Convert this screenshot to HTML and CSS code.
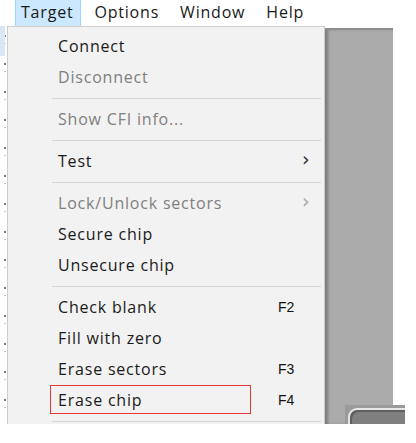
FILE: index.html
```html
<!DOCTYPE html>
<html>
<head>
<meta charset="utf-8">
<link rel="stylesheet" href="styles.css">
</head>
<body>
<div class="menubar">
  <div class="mb-item active">Target</div>
  <div class="mb-item">Options</div>
  <div class="mb-item">Window</div>
  <div class="mb-item">Help</div>
</div>
<div class="main">
  <div class="strip"></div>
  <div class="menu">
    <div class="item"><span class="label">Connect</span></div>
    <div class="item disabled"><span class="label">Disconnect</span></div>
    <div class="sep"></div>
    <div class="item disabled"><span class="label">Show CFI info...</span></div>
    <div class="sep"></div>
    <div class="item"><span class="label">Test</span><span class="arrow">&#x203A;</span></div>
    <div class="sep"></div>
    <div class="item disabled"><span class="label">Lock/Unlock sectors</span><span class="arrow">&#x203A;</span></div>
    <div class="item"><span class="label">Secure chip</span></div>
    <div class="item"><span class="label">Unsecure chip</span></div>
    <div class="sep"></div>
    <div class="item"><span class="label">Check blank</span><span class="key">F2</span></div>
    <div class="item"><span class="label">Fill with zero</span></div>
    <div class="item"><span class="label">Erase sectors</span><span class="key">F3</span></div>
    <div class="item marked"><span class="label">Erase chip</span><span class="key">F4</span></div>
    <div class="sep"></div>
  </div>
  <div class="shade">
    <div class="btn"><div class="btn-in"></div></div>
  </div>
</div>
</body>
</html>
```
FILE: styles.css
```css
html, body {
  margin: 0;
  padding: 0;
}
body {
  width: 416px;
  height: 443px;
  background: #ffffff;
  overflow: hidden;
  font-family: "Open Sans", "Noto Sans", sans-serif;
  color: #1a1a1a;
}
.menubar {
  height: 26px;
  display: flex;
  align-items: stretch;
  padding-left: 15px;
  font-size: 16px;
  letter-spacing: 0.8px;
}
.mb-item {
  display: flex;
  align-items: center;
  padding: 0 7px 1px 5px;
  margin-right: 7px;
  border: 1px solid transparent;
  border-top: none;
}
.mb-item.active {
  background: #cce8ff;
  border-color: #99d1ff;
  border-bottom: 1px solid #cce8ff;
}
.main {
  display: flex;
  height: 398px;
  overflow: hidden;
}
.strip {
  width: 7px;
  background:
    linear-gradient(#d9e6f3, #d9e6f3) 0 0 / 5px 30px no-repeat,
    repeating-linear-gradient(#ffffff 0 9px, #7a7a7a 9px 11px, #ffffff 11px 17px, #c8c8c8 17px 18px, #ffffff 18px 28px) 4px 0 / 2px 100% no-repeat,
    #ffffff;
}
.menu {
  width: 316px;
  background: #f2f2f2;
  border: 1px solid #cccccc;
  border-bottom: none;
  padding-top: 4px;
  display: flex;
  flex-direction: column;
  font-size: 16px;
  letter-spacing: 0.8px;
}
.item {
  height: 31px;
  flex: none;
  display: flex;
  align-items: center;
  padding-left: 50px;
  padding-bottom: 2px;
  box-sizing: border-box;
  position: relative;
}
.item.disabled {
  color: #7f7f7f;
}
.label {
  flex: 1;
}
.arrow {
  width: 22px;
  font-size: 19px;
  font-family: "DejaVu Sans", sans-serif;
  color: #333333;
  line-height: 1;
  margin-bottom: 3px;
  letter-spacing: 0;
}
.item.disabled .arrow {
  color: #a8a8a8;
}
.key {
  width: 46px;
  font-family: "Liberation Sans", Arial, sans-serif;
  font-size: 14px;
  letter-spacing: 0;
  color: #111111;
}
.item.marked::after {
  content: "";
  position: absolute;
  left: 42px;
  top: 0;
  width: 199px;
  height: 27px;
  border: 1px solid #e53935;
}
.sep {
  flex: none;
  height: 11px;
  margin: 0 3px 0 44px;
  background: linear-gradient(#d5d5d5, #d5d5d5) 0 5px / 100% 1px no-repeat;
}
.shade {
  width: 68px;
  margin-top: 2px;
  background: #ababab;
  border-top: 2px solid #8e8e8e;
  box-shadow: inset 4px 0 3px -1px #7d7d7d;
  padding: 375px 0 0 20px;
  box-sizing: border-box;
}
.btn {
  width: 60px;
  height: 30px;
  background: #9a9a9a;
  padding: 3px 0 0 3px;
  box-sizing: border-box;
}
.btn-in {
  height: 40px;
  border-radius: 9px 0 0 0;
  border: 2px solid #e6e6e6;
  border-right: none;
  border-bottom: none;
  background: #7f7f7f;
  box-shadow: inset 2px 2px 0 #5e5e5e;
}
```
